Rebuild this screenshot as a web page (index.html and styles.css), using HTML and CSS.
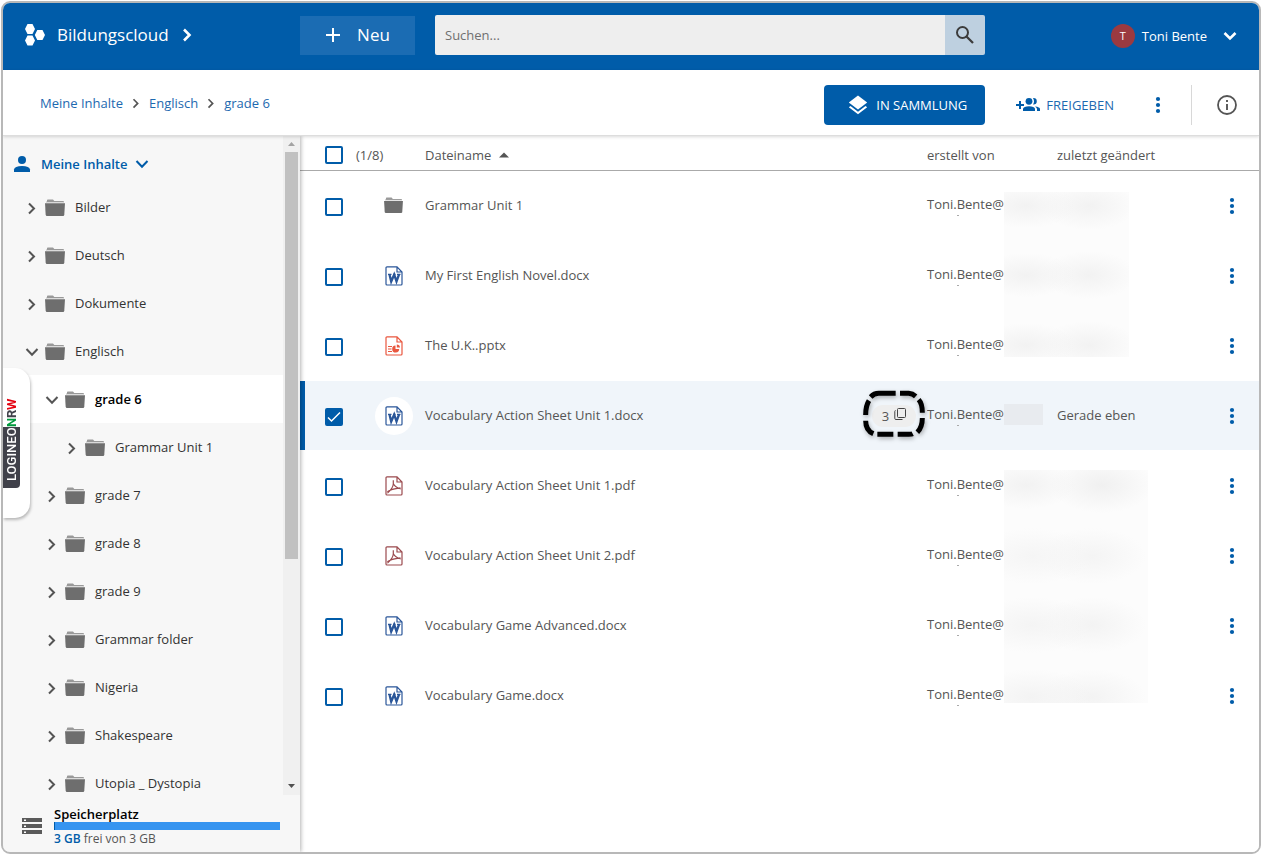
FILE: index.html
```html
<!DOCTYPE html>
<html lang="de">
<head>
<meta charset="utf-8">
<meta name="viewport" content="width=device-width, initial-scale=1">
<title>Bildungscloud</title>
<link rel="stylesheet" href="styles.css">
</head>
<body>
<svg class="sprite" aria-hidden="true">
  <symbol id="chev" viewBox="0 0 12 14"><path d="M3 2.500 8 7.500 3 12.500" fill="none" stroke="currentColor" stroke-width="2"/></symbol>
  <symbol id="chev-down" viewBox="0 0 14 12"><path d="M1.500 3 7 8.800 12.500 3" fill="none" stroke="currentColor" stroke-width="2"/></symbol>
  <symbol id="folder" viewBox="0 0 20 18"><path d="M1 3.500 2 2V1.200Q2 .5 2.800 .5H8L9.300 2H18Q19 2 19 3V3.500Z" fill="#999"/><path d="M1.500 3.600H18.800" stroke="#e4e4e4" stroke-width=".7"/><path d="M0 4.200H20L19.300 15.800Q19.200 17 18 17H2Q.8 17 .7 15.800Z" fill="#6e6e6e"/></symbol>
  <symbol id="dots" viewBox="0 0 6 18"><g fill="currentColor"><circle cx="3" cy="3" r="2.100"/><circle cx="3" cy="9" r="2.100"/><circle cx="3" cy="15" r="2.100"/></g></symbol>
  <symbol id="page" viewBox="0 0 18 20"><path d="M12 .8H2Q1 .8 1 1.800V18Q1 19 2 19H16Q17 19 17 18V6Z M12 .8V6H17" fill="#fff" stroke="currentColor" stroke-width="1.200"/></symbol>
  <symbol id="word" viewBox="0 0 18 20"><use href="#page"/><path d="M4.500 8.500 6.200 15.500 9.200 8.500 11.500 15.500 14 8.500" fill="none" stroke="currentColor" stroke-width="2.300"/><path d="M3 8.300H6.500M8 8.300H10.500M12 8.300H15.500" stroke="currentColor" stroke-width="1.300"/></symbol>
  <symbol id="slides" viewBox="0 0 18 20"><use href="#page"/><path d="M3 10.500H7M3 13H6.500M3 15.500H7" stroke="currentColor" stroke-width="1.100"/><path d="M10.500 9.500A3.500 3.500 0 1 0 14.200 13H10.500Z" fill="currentColor"/><path d="M11.800 8.500V11.500H15A3.300 3.300 0 0 0 11.800 8.500Z" fill="currentColor"/></symbol>
  <symbol id="pdf" viewBox="0 0 18 20"><use href="#page"/><path d="M8.300 4.300V8Q8 12 3 16.500L2.800 15.500Q5.500 13 15.500 11.800M8.500 8Q10.500 11.500 15.800 13" fill="none" stroke="currentColor" stroke-width="1.200"/></symbol>
</svg>

<div class="frame">
  <header class="topbar">
    <a class="brand" href="#">
      <svg width="22" height="24" viewBox="0 0 22 24" fill="#fff"><path d="M3.500 1H8.500L11 6 8.500 11H3.500L1 6ZM13.300 7H18.500L21 12 18.500 17H13.300L10.800 12ZM3.500 12.500H8.500L11 17.500 8.500 22.500H3.500L1 17.500Z"/></svg>
      <span>Bildungscloud</span>
      <svg width="12" height="14" viewBox="0 0 12 14"><path d="M3 1.500 8.500 7 3 12.500" fill="none" stroke="#fff" stroke-width="2.600"/></svg>
    </a>
    <button class="new" type="button">
      <svg width="16" height="16" viewBox="0 0 16 16"><path d="M8 1V15M1 8H15" stroke="#fff" stroke-width="2"/></svg>
      Neu
    </button>
    <form class="search" role="search">
      <input type="search" aria-label="Suchen" placeholder="Suchen...">
      <button type="button" aria-label="Suche starten"><svg width="20" height="20" viewBox="0 0 20 20" fill="none" stroke="#3c3c3c"><circle cx="7.500" cy="7.500" r="5.500" stroke-width="2"/><path d="M11.500 11.500 18 18" stroke-width="2.300"/></svg></button>
    </form>
    <button class="user" type="button">
      <span class="avatar">T</span>
      <span>Toni Bente</span>
      <svg width="14" height="12" viewBox="0 0 14 12"><path d="M1.500 3 7 8.500 12.500 3" fill="none" stroke="#fff" stroke-width="2.600"/></svg>
    </button>
  </header>

  <div class="toolbar">
    <nav class="crumbs" aria-label="Pfad">
      <a href="#">Meine Inhalte</a>
      <svg width="10" height="12"><use href="#chev"/></svg>
      <a href="#">Englisch</a>
      <svg width="10" height="12"><use href="#chev"/></svg>
      <a href="#">grade 6</a>
    </nav>
    <div class="actions">
      <button class="collect" type="button">
        <svg width="20" height="20" viewBox="0 0 20 20" fill="#fff"><path d="M10 .5 19.200 7.600 10 14.600 .8 7.600Z"/><path d="M.8 12.200 2.500 10.900 10 16.700 17.500 10.900 19.200 12.200 10 19.300Z"/></svg>
        IN SAMMLUNG
      </button>
      <button class="share" type="button">
        <svg width="24" height="16" viewBox="0 0 24 16" fill="#005ca9"><path d="M3 4H5V7H8V9H5V12H3V9H0V7H3Z"/><circle cx="13" cy="4.300" r="3.400"/><path d="M7 14V11.800Q7.500 9.200 13 9.200T19 11.800V14Z"/><path d="M17 1Q20.800 .8 20.800 4.300T17 7.600Q19 4.500 17 1ZM19 9.500Q24 10 24 12V14H21V12Q20.800 10.500 19 9.500Z"/></svg>
        FREIGEBEN
      </button>
      <button class="more" type="button" aria-label="Weitere Optionen"><svg width="6" height="18"><use href="#dots"/></svg></button>
      <button class="info" type="button" aria-label="Information"><svg width="20" height="20" viewBox="0 0 20 20"><circle cx="10" cy="10" r="9" fill="none" stroke="#555" stroke-width="1.800"/><path d="M10 5V7M10 9V15" stroke="#555" stroke-width="1.900"/></svg></button>
    </div>
  </div>

  <div class="workspace">
    <aside class="sidebar">
      <div class="tree-area">
        <nav class="tree" aria-label="Ordner">
          <button class="root" type="button">
            <svg width="18" height="18" viewBox="0 0 18 18" fill="#005ca9"><circle cx="9" cy="5" r="4"/><path d="M1 17V14.500Q1.500 11 9 11T17 14.500V17Z"/></svg>
            <span>Meine Inhalte</span>
            <svg width="14" height="12"><use href="#chev-down"/></svg>
          </button>
          <a class="node" href="#"><svg class="toggle"><use href="#chev"/></svg><svg class="folder"><use href="#folder"/></svg>Bilder</a>
          <a class="node" href="#"><svg class="toggle"><use href="#chev"/></svg><svg class="folder"><use href="#folder"/></svg>Deutsch</a>
          <a class="node" href="#"><svg class="toggle"><use href="#chev"/></svg><svg class="folder"><use href="#folder"/></svg>Dokumente</a>
          <a class="node" href="#"><svg class="toggle"><use href="#chev-down"/></svg><svg class="folder"><use href="#folder"/></svg>Englisch</a>
          <a class="node level-1 current" href="#"><svg class="toggle"><use href="#chev-down"/></svg><svg class="folder"><use href="#folder"/></svg>grade 6</a>
          <a class="node level-2" href="#"><svg class="toggle"><use href="#chev"/></svg><svg class="folder"><use href="#folder"/></svg>Grammar Unit 1</a>
          <a class="node level-1" href="#"><svg class="toggle"><use href="#chev"/></svg><svg class="folder"><use href="#folder"/></svg>grade 7</a>
          <a class="node level-1" href="#"><svg class="toggle"><use href="#chev"/></svg><svg class="folder"><use href="#folder"/></svg>grade 8</a>
          <a class="node level-1" href="#"><svg class="toggle"><use href="#chev"/></svg><svg class="folder"><use href="#folder"/></svg>grade 9</a>
          <a class="node level-1" href="#"><svg class="toggle"><use href="#chev"/></svg><svg class="folder"><use href="#folder"/></svg>Grammar folder</a>
          <a class="node level-1" href="#"><svg class="toggle"><use href="#chev"/></svg><svg class="folder"><use href="#folder"/></svg>Nigeria</a>
          <a class="node level-1" href="#"><svg class="toggle"><use href="#chev"/></svg><svg class="folder"><use href="#folder"/></svg>Shakespeare</a>
          <a class="node level-1" href="#"><svg class="toggle"><use href="#chev"/></svg><svg class="folder"><use href="#folder"/></svg>Utopia _ Dystopia</a>
        </nav>
        <div class="scrollbar" aria-hidden="true">
          <svg width="17" height="16" viewBox="0 0 17 16"><path d="M5 10 8.500 6 12 10Z" fill="#a3a3a3"/></svg>
          <div class="track"><div class="thumb"></div></div>
          <svg width="17" height="17" viewBox="0 0 17 17"><path d="M5 6H12L8.500 10Z" fill="#505050"/></svg>
        </div>
      </div>
      <div class="storage">
        <svg width="20" height="16" viewBox="0 0 20 16"><path d="M0 0H20V4H0ZM0 6H20V10H0ZM0 12H20V16H0Z" fill="#5a5a5a"/><path d="M2 1.500H4V3H2ZM2 7.500H4V9H2ZM2 13.500H4V15H2Z" fill="#fff"/></svg>
        <div class="quota">
          <strong>Speicherplatz</strong>
          <div class="meter"></div>
          <span><b>3 GB</b> frei von 3 GB</span>
        </div>
      </div>
    </aside>

    <main class="files">
      <table>
        <colgroup><col class="c-check"><col class="c-icon"><col><col class="c-version"><col class="c-author"><col class="c-changed"><col class="c-menu"></colgroup>
        <thead>
          <tr>
            <th colspan="2" class="check"><label class="all"><input type="checkbox"> (1/8)</label></th>
            <th colspan="2">Dateiname <svg class="sort" width="10" height="6" viewBox="0 0 10 6"><path d="M0 5.500 5 .5 10 5.500Z" fill="#555"/></svg></th>
            <th>erstellt von</th>
            <th>zuletzt geändert</th>
            <th></th>
          </tr>
        </thead>
        <tbody>
          <tr>
            <td class="check"><input type="checkbox" aria-label="Grammar Unit 1 auswählen"></td>
            <td><span class="type"><svg width="19" height="17"><use href="#folder"/></svg></span></td>
            <td colspan="2" class="name">Grammar Unit 1</td>
            <td class="author">Toni.Bente@</td><td></td>
            <td class="menu"><button type="button" aria-label="Menü"><svg width="6" height="18"><use href="#dots"/></svg></button></td>
          </tr>
          <tr>
            <td class="check"><input type="checkbox" aria-label="My First English Novel.docx auswählen"></td>
            <td><span class="type word"><svg width="18" height="20"><use href="#word"/></svg></span></td>
            <td colspan="2" class="name">My First English Novel.docx</td>
            <td class="author">Toni.Bente@</td><td></td>
            <td class="menu"><button type="button" aria-label="Menü"><svg width="6" height="18"><use href="#dots"/></svg></button></td>
          </tr>
          <tr>
            <td class="check"><input type="checkbox" aria-label="The U.K..pptx auswählen"></td>
            <td><span class="type slides"><svg width="18" height="20"><use href="#slides"/></svg></span></td>
            <td colspan="2" class="name">The U.K..pptx</td>
            <td class="author">Toni.Bente@</td><td></td>
            <td class="menu"><button type="button" aria-label="Menü"><svg width="6" height="18"><use href="#dots"/></svg></button></td>
          </tr>
          <tr class="selected">
            <td class="check"><input type="checkbox" checked aria-label="Vocabulary Action Sheet Unit 1.docx auswählen"></td>
            <td><span class="type word"><svg width="18" height="20"><use href="#word"/></svg></span></td>
            <td class="name">Vocabulary Action Sheet Unit 1.docx</td>
            <td class="version">
              <span class="badge">3 <svg width="12" height="12" viewBox="0 0 12 12" fill="none" stroke="#444"><rect x="3.500" y=".5" width="8" height="9" rx="1"/><path d="M1.500 2.500Q.8 2.500 .8 3.500V10.500Q.8 11.500 2 11.500H8.500"/></svg></span>
              <svg class="marker" width="66" height="50" viewBox="0 0 198 150" aria-hidden="true"><path d="M26 24Q36 13 50 13H101M114 13H140Q152 14 161 22M170 32Q181 44 181 71M181 87Q181 115 166 130M152 134Q148 136 107 136M94 136H46M34 134Q11 124 11 95M11 78Q11 50 21 35" fill="none" stroke="#000" stroke-width="15"/></svg>
            </td>
            <td class="author">Toni.Bente@</td><td class="name">Gerade eben</td>
            <td class="menu"><button type="button" aria-label="Menü"><svg width="6" height="18"><use href="#dots"/></svg></button></td>
          </tr>
          <tr>
            <td class="check"><input type="checkbox" aria-label="Vocabulary Action Sheet Unit 1.pdf auswählen"></td>
            <td><span class="type pdf"><svg width="18" height="20"><use href="#pdf"/></svg></span></td>
            <td colspan="2" class="name">Vocabulary Action Sheet Unit 1.pdf</td>
            <td class="author">Toni.Bente@</td><td></td>
            <td class="menu"><button type="button" aria-label="Menü"><svg width="6" height="18"><use href="#dots"/></svg></button></td>
          </tr>
          <tr>
            <td class="check"><input type="checkbox" aria-label="Vocabulary Action Sheet Unit 2.pdf auswählen"></td>
            <td><span class="type pdf"><svg width="18" height="20"><use href="#pdf"/></svg></span></td>
            <td colspan="2" class="name">Vocabulary Action Sheet Unit 2.pdf</td>
            <td class="author">Toni.Bente@</td><td></td>
            <td class="menu"><button type="button" aria-label="Menü"><svg width="6" height="18"><use href="#dots"/></svg></button></td>
          </tr>
          <tr>
            <td class="check"><input type="checkbox" aria-label="Vocabulary Game Advanced.docx auswählen"></td>
            <td><span class="type word"><svg width="18" height="20"><use href="#word"/></svg></span></td>
            <td colspan="2" class="name">Vocabulary Game Advanced.docx</td>
            <td class="author">Toni.Bente@</td><td></td>
            <td class="menu"><button type="button" aria-label="Menü"><svg width="6" height="18"><use href="#dots"/></svg></button></td>
          </tr>
          <tr>
            <td class="check"><input type="checkbox" aria-label="Vocabulary Game.docx auswählen"></td>
            <td><span class="type word"><svg width="18" height="20"><use href="#word"/></svg></span></td>
            <td colspan="2" class="name">Vocabulary Game.docx</td>
            <td class="author">Toni.Bente@</td><td></td>
            <td class="menu"><button type="button" aria-label="Menü"><svg width="6" height="18"><use href="#dots"/></svg></button></td>
          </tr>
        </tbody>
      </table>
      <div class="veil veil-top"></div>
      <div class="veil veil-mid"></div>
      <div class="veil veil-low"></div>
    </main>
  </div>

  <a class="side-tab" href="#" aria-label="LOGINEO NRW"><span class="logo"><span class="dark">LOGINEO</span><span class="n">N</span><span class="r">R</span><span class="w">W</span></span></a>
</div>
</body>
</html>
```
FILE: styles.css
```css
* { box-sizing: border-box; }

body {
  margin: 0;
  padding: 1px;
  background: #fff;
  color: #555;
  font: 13px/20px "Open Sans", "Noto Sans", sans-serif;
}

a { color: inherit; text-decoration: none; }
button { padding: 0; border: 0; background: none; color: inherit; font: inherit; cursor: pointer; }
svg { flex: none; display: block; }
.sprite { position: absolute; width: 0; height: 0; }

.frame {
  position: relative;
  display: flex;
  flex-direction: column;
  height: calc(100vh - 2px);
  overflow: hidden;
  border: 2px solid #b8b8b8;
  border-radius: 9px;
}

/* Top bar */
.topbar {
  display: flex;
  flex: none;
  align-items: center;
  height: 67px;
  padding: 0 22px 3px 0;
  background: #005ca9;
  color: #fff;
}
.brand { display: flex; align-items: center; width: 297px; padding-left: 21px; font-size: 17px; font-weight: 500; }
.brand span { margin: 0 12px 0 11px; }
.new {
  display: flex;
  align-items: center;
  justify-content: center;
  gap: 16px;
  width: 115px;
  height: 39px;
  margin-right: 20px;
  background: #1b6cb3;
  font-size: 17px;
  font-weight: 500;
}
.search { display: flex; flex: 0 1 550px; height: 40px; margin-right: 20px; border-radius: 2px; overflow: hidden; }
.search input { flex: 1; min-width: 0; padding: 0 10px; border: 0; border-radius: 0; background: #eee; font: inherit; outline: 0; }
.search input::placeholder { color: #707070; opacity: 1; }
.search button { display: grid; place-items: center; width: 40px; background: #bed0e0; }
.user { display: flex; align-items: center; margin: 2px 0 0 auto; font-weight: 500; }
.avatar { width: 24px; height: 24px; margin-right: 7px; border-radius: 50%; background: #9b3a40; font-size: 11px; line-height: 24px; text-align: center; }
.user svg { margin-left: 16px; }

/* Toolbar */
.toolbar {
  position: relative;
  z-index: 2;
  display: flex;
  flex: none;
  align-items: center;
  justify-content: space-between;
  height: 66px;
  padding: 4px 22px 0 37px;
  border-bottom: 1px solid #ddd;
  background: #fff;
  box-shadow: 0 1px 3px rgba(0, 0, 0, .15);
}
.crumbs { display: flex; align-items: center; gap: 8px; padding-bottom: 4px; color: #1d69b0; }
.crumbs svg { color: #555; }
.actions { display: flex; align-items: center; color: #1d69b0; }
.collect { display: flex; align-items: center; justify-content: center; gap: 8px; width: 161px; height: 40px; padding-left: 6px; border-radius: 4px; background: #005ca9; color: #fff; font-weight: 500; }
.share { display: flex; align-items: center; gap: 6px; margin-left: 31px; }
.more { margin: 0 30px 0 41px; color: #005ca9; }
.info { display: grid; align-items: center; height: 40px; padding-left: 25px; border-left: 1px solid #d8d8d8; }

/* Workspace */
.workspace { display: flex; flex: 1; min-height: 0; }
.sidebar {
  z-index: 1;
  display: flex;
  flex: none;
  flex-direction: column;
  width: 297px;
  background: #f7f7f7;
  box-shadow: 1px 0 4px rgba(0, 0, 0, .3);
}
.tree-area { display: flex; flex: 1; min-height: 0; }
.tree { flex: 1; overflow: hidden; color: #333; }
.root { display: flex; align-items: center; height: 47px; padding: 8px 0 0 10px; color: #005ca9; font-weight: 600; }
.root span { margin: 0 7px 0 10px; }
.node { display: flex; align-items: center; height: 48px; padding-left: 22px; }
.level-1 { padding-left: 42px; }
.level-2 { padding-left: 62px; }
.current { background: #fff; color: #000; font-weight: 600; }
.toggle { width: 14px; height: 14px; margin: 2px 6px 0 0; color: #555; }
.folder { width: 20px; height: 18px; margin: 1px 10px 0 0; }
.scrollbar { display: flex; flex-direction: column; width: 17px; background: #f0f0f0; }
.track { flex: 1; padding: 0 2px; }
.thumb { height: 65%; background: #c1c1c1; }
.storage { display: flex; flex: none; align-items: center; gap: 12px; height: 57px; padding: 4px 20px 0 19px; }
.quota { flex: 1; padding-top: 2px; line-height: 16px; }
.quota strong { display: block; color: #000; font-weight: 600; }
.quota span { font-size: 12px; }
.quota b { color: #005ca9; font-weight: 600; }
.meter { height: 8px; border-left: 1px solid #005ca9; background: #3694f0; }

/* File list */
.files { position: relative; flex: 1; min-width: 0; background: #fff; }
table { width: 100%; table-layout: fixed; border-spacing: 0; }
.c-check { width: 75px; }
.c-icon { width: 50px; }
.c-version { width: 67px; }
.c-author { width: 130px; }
.c-changed { width: 143px; }
.c-menu { width: 59px; }
th, td { padding: 0; text-align: left; font-weight: 400; white-space: nowrap; }
th { height: 35px; padding-top: 4px; border-bottom: 1px solid #aaa; }
td { height: 70px; border-bottom: 1px solid #fff; }
td.name { padding-bottom: 2px; }
td.author { padding-bottom: 4px; background: linear-gradient(#aaa, #aaa) 30px 44px / 2px 1px no-repeat; }
.check { padding-left: 25px; }
.all { display: flex; align-items: center; gap: 13px; }
.sort { display: inline-block; margin: 0 0 2px 4px; }
input[type="checkbox"] {
  appearance: none;
  display: block;
  width: 18px;
  height: 18px;
  margin: 0;
  border: 2px solid #005ca9;
  border-radius: 2px;
  background: #fff;
}
td input[type="checkbox"] { margin-top: 3px; }
input[type="checkbox"]:checked {
  background: #005ca9 url("data:image/svg+xml,%3Csvg xmlns='http://www.w3.org/2000/svg' viewBox='0 0 14 14'%3E%3Cpath d='M1 7.500 4.500 11 13 2.500' fill='none' stroke='%23fff' stroke-width='1.500'/%3E%3C/svg%3E");
}
.type { display: grid; place-items: center; width: 38px; height: 38px; border-radius: 50%; background: #fff; }
.type svg { margin-right: 1px; }
.word { color: #2a5699; }
.slides { color: #e9573f; }
.pdf { color: #9b4a4e; }
.selected td { background-color: #f0f5fa; }
.selected .check { box-shadow: inset 5px 0 #005ca9; }
.version { position: relative; }
.badge { display: flex; align-items: center; justify-content: center; gap: 5px; width: 44px; height: 22px; margin-left: 12px; border-radius: 11px; background: #eee; }
.badge svg { margin-bottom: 3px; }
.marker { position: absolute; top: 8px; left: 2px; filter: drop-shadow(1px 2px 2px rgba(0, 0, 0, .3)); }
.menu button { display: block; margin-left: 29px; color: #005ca9; }

/* Blurred-out account details */
.veil { position: absolute; background: #fcfcfc; }
.veil-top {
  top: 56px; right: 130px; width: 125px; height: 165px;
  background:
    radial-gradient(ellipse 50px 22px at 22px 14px, #f2f2f2, transparent),
    radial-gradient(ellipse 48px 24px at 85px 14px, #f2f2f2, transparent),
    radial-gradient(ellipse 50px 22px at 22px 83px, #f2f2f2, transparent),
    radial-gradient(ellipse 48px 24px at 85px 83px, #f2f2f2, transparent),
    radial-gradient(ellipse 50px 22px at 22px 153px, #f2f2f2, transparent),
    radial-gradient(ellipse 48px 24px at 85px 153px, #f2f2f2, transparent), #fcfcfc;
}
.veil-mid { top: 268px; right: 216px; width: 39px; height: 21px; background: #e8ebef; }
.veil-low {
  top: 334px; right: 111px; width: 144px; height: 233px;
  background:
    radial-gradient(ellipse 50px 24px at 22px 15px, #f2f2f2, transparent),
    radial-gradient(ellipse 52px 28px at 98px 15px, #f0f0f0, transparent),
    radial-gradient(ellipse 60px 28px at 28px 86px, #f5f5f5, transparent),
    radial-gradient(ellipse 54px 28px at 88px 86px, #f4f4f4, transparent),
    radial-gradient(ellipse 60px 28px at 28px 155px, #f4f4f4, transparent),
    radial-gradient(ellipse 54px 28px at 88px 155px, #f3f3f3, transparent),
    radial-gradient(ellipse 60px 28px at 28px 227px, #f3f3f3, transparent),
    radial-gradient(ellipse 54px 28px at 88px 227px, #f3f3f3, transparent), #fcfcfc;
}

/* Portal tab over the left edge */
.side-tab {
  position: absolute;
  z-index: 3;
  top: 365px;
  left: 0;
  width: 27px;
  height: 150px;
  border-radius: 0 15px 15px 0;
  background: #fff;
  box-shadow: 1px 2px 3px rgba(0, 0, 0, .25);
}
.logo { display: flex; width: 17px; height: 120px; padding-right: 0; font: 500 13px/17px Roboto, sans-serif; writing-mode: vertical-rl; transform: rotate(180deg); }
.dark { padding-top: 7px; border-radius: 4px 0 0 0; background: #40414a; color: #fff; }
.n { color: #009a3d; }
.r { color: #40414a; }
.w { color: #e3000f; }
.n, .r, .w { font-weight: 700; }
```
